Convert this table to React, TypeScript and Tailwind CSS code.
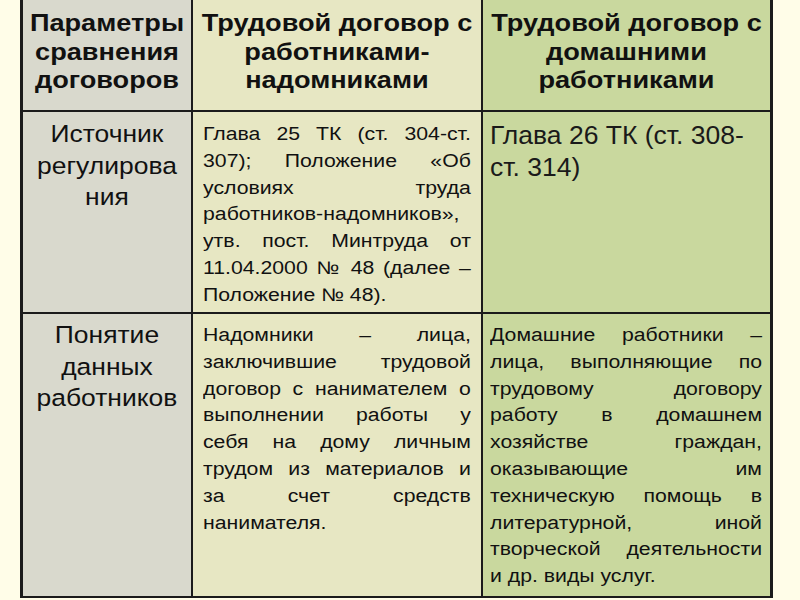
// the slide text is a little wider than plain Arial, so text blocks get a horizontal stretch
const head = "text-[23px] leading-[28.5px] font-bold text-center text-[#111] origin-top-left scale-x-[1.18]";
const side = "text-[24.5px] leading-[31.5px] text-center text-[#111] origin-top-left scale-x-[1.08] w-[155.5px]";
const body = "text-[18px] leading-[26.8px] text-[#111] origin-top-left scale-x-[1.18]";

function Justified({ lines, width }: { lines: string[]; width: string }) {
  return (
    <div className={`${body} ${width}`}>
      {lines.map((line, i) => (
        <div
          key={i}
          className={i < lines.length - 1 ? "text-justify [text-align-last:justify]" : "text-left"}
        >
          {line}
        </div>
      ))}
    </div>
  );
}

export default function App() {
  return (
    <div
      className="w-[800px] h-[600px] bg-[#fffde8] overflow-hidden"
      style={{ fontFamily: '"Liberation Sans", Arial, sans-serif' }}
    >
      <div className="ml-[20px] w-[753px] border-x-[3px] border-b-[2px] border-[#1b1b1b] bg-[#1b1b1b]">
        <div className="grid grid-cols-[168px_288px_287px] grid-rows-[110px_200px_282px] gap-[2px]">
          {/* header row */}
          <div className="bg-[#d9d9cd] pt-[9px]">
            <div className={`${head} w-[142.4px]`}>
              <div>Параметры</div>
              <div>сравнения</div>
              <div>договоров</div>
            </div>
          </div>
          <div className="bg-[#e7e7c3] pt-[9px]">
            <div className={`${head} w-[244px]`}>
              <div>Трудовой договор с</div>
              <div>работниками-</div>
              <div>надомниками</div>
            </div>
          </div>
          <div className="bg-[#c9d89e] pt-[9px]">
            <div className={`${head} w-[243.2px]`}>
              <div>Трудовой договор с</div>
              <div>домашними</div>
              <div>работниками</div>
            </div>
          </div>

          {/* source row */}
          <div className="bg-[#d9d9cd] pt-[6px]">
            <div className={side}>
              <div>Источник</div>
              <div>регулирова</div>
              <div>ния</div>
            </div>
          </div>
          <div className="bg-[#e7e7c3] pt-[9px] pl-[10px]">
            <Justified
              width="w-[227px]"
              lines={[
                "Глава 25 ТК (ст. 304-ст.",
                "307); Положение «Об",
                "условиях труда",
                "работников-надомников»,",
                "утв. пост. Минтруда от",
                "11.04.2000 № 48 (далее –",
                "Положение № 48).",
              ]}
            />
          </div>
          <div className="bg-[#c9d89e] pt-[8px] pl-[7px] pr-[8px] text-[26.5px] leading-[31.5px] text-[#1a1a1a]">
            <div>Глава 26 ТК (ст. 308-</div>
            <div>ст. 314)</div>
          </div>

          {/* definition row */}
          <div className="bg-[#d9d9cd] pt-[5px]">
            <div className={side}>
              <div>Понятие</div>
              <div>данных</div>
              <div>работников</div>
            </div>
          </div>
          <div className="bg-[#e7e7c3] pt-[8px] pl-[10px]">
            <Justified
              width="w-[227px]"
              lines={[
                "Надомники – лица,",
                "заключившие трудовой",
                "договор с нанимателем о",
                "выполнении работы у",
                "себя на дому личным",
                "трудом из материалов и",
                "за счет средств",
                "нанимателя.",
              ]}
            />
          </div>
          <div className="bg-[#c9d89e] pt-[8px] pl-[7px]">
            <Justified
              width="w-[230.5px]"
              lines={[
                "Домашние работники –",
                "лица, выполняющие по",
                "трудовому договору",
                "работу в домашнем",
                "хозяйстве граждан,",
                "оказывающие им",
                "техническую помощь в",
                "литературной, иной",
                "творческой деятельности",
                "и др. виды услуг.",
              ]}
            />
          </div>
        </div>
      </div>
    </div>
  );
}
